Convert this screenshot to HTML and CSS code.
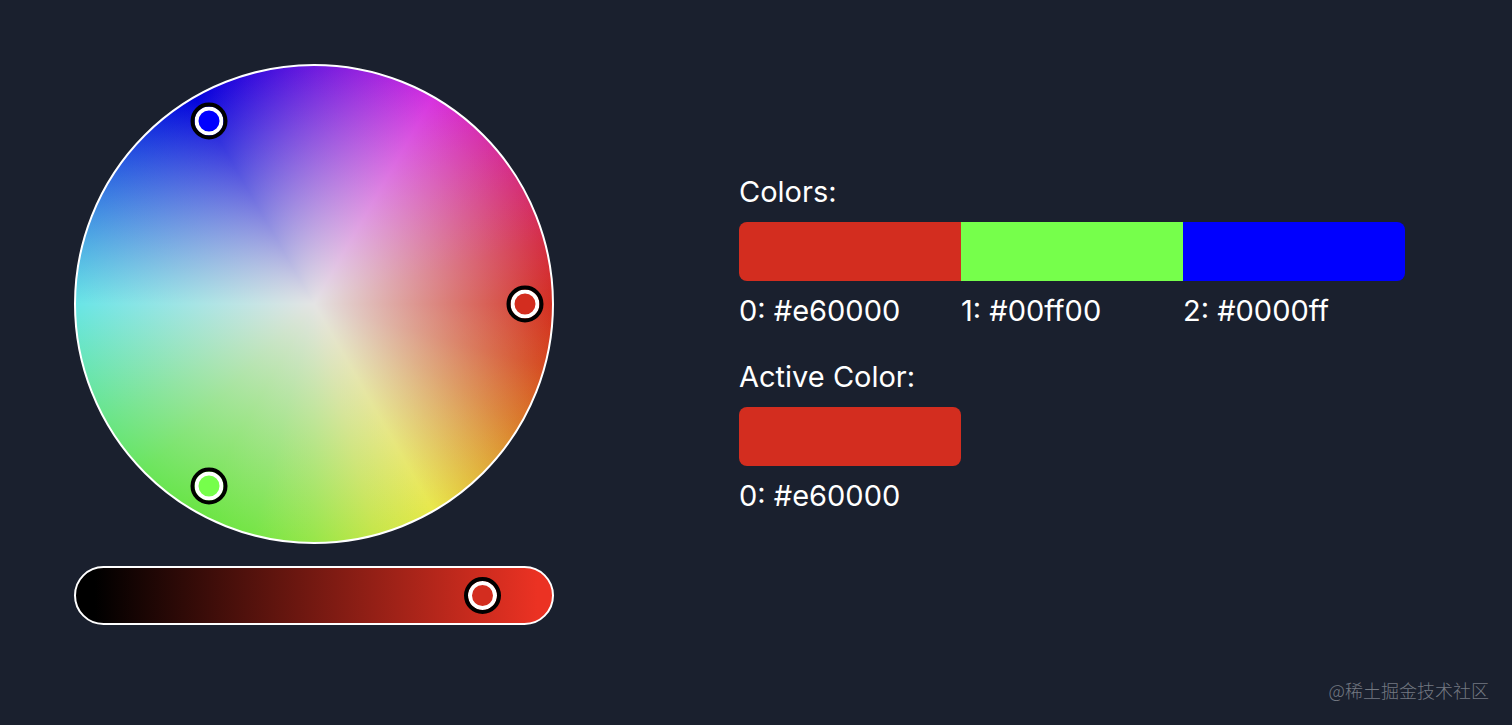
FILE: index.html
```
<!DOCTYPE html>
<html lang="en">
<head>
  <meta charset="UTF-8" />
  <meta name="viewport" content="width=device-width, initial-scale=1" />
  <title>Color Picker</title>
  <link rel="stylesheet" href="styles.css">
</head>
<body>
  <main class="demo">
    <div class="picker">
      <div class="wheel">
        <button class="handle handle-red" type="button" aria-label="Color 0"></button>
        <button class="handle handle-green" type="button" aria-label="Color 1"></button>
        <button class="handle handle-blue" type="button" aria-label="Color 2"></button>
      </div>
      <input class="slider" type="range" min="0" max="100" value="90" aria-label="Brightness">
    </div>

    <div class="values">
      <section>
        <h2 class="title">Colors:</h2>
        <ul class="swatches">
          <li><div class="swatch red"></div>0: #e60000</li>
          <li><div class="swatch green"></div>1: #00ff00</li>
          <li><div class="swatch blue"></div>2: #0000ff</li>
        </ul>
      </section>
      <section>
        <h2 class="title">Active Color:</h2>
        <ul class="swatches">
          <li><div class="swatch red"></div>0: #e60000</li>
        </ul>
      </section>
    </div>
  </main>

  <footer class="watermark">@稀土掘金技术社区</footer>
</body>
</html>
```
FILE: styles.css
```
* {
  box-sizing: border-box;
}
body {
  margin: 0;
  min-height: 100vh;
  display: flex;
  flex-direction: column;
  justify-content: space-between;
  background: #1a202e;
  color: #fff;
  font-family: Inter, "Noto Sans CJK SC", sans-serif;
  font-size: 29px;
  line-height: 44px;
}
.demo {
  display: grid;
  grid-template-columns: 480px minmax(0, 1fr);
  align-items: center;
  gap: 185px;
  padding: 64px 107px 0 74px;
}

/* wheel + slider */
.picker {
  display: flex;
  flex-direction: column;
  gap: 22px;
}
.wheel {
  position: relative;
  aspect-ratio: 1;
  border: 2px solid #fff;
  border-radius: 50%;
  background:
    radial-gradient(closest-side, #e4e4e4, transparent),
    conic-gradient(
      from 90deg,
      #d32d1f,
      #d54a20 15deg,
      #da7a2a 30deg,
      #e8e84a 60deg,
      #c6e648 75deg,
      #97e647 90deg,
      #75e545 105deg,
      #69e544 120deg,
      #69e559 135deg,
      #69e584 150deg,
      #68e5e6 180deg,
      #0000dc 240deg,
      #d730df 300deg,
      #d52e76 330deg,
      #d42d43 345deg,
      #d32d1f
    );
  background-origin: border-box;
}
.handle {
  position: absolute;
  width: 37px;
  height: 37px;
  padding: 0;
  border: 4px solid #000;
  border-radius: 50%;
  box-shadow: inset 0 0 0 4px #fff;
  transform: translate(-50%, -50%);
  cursor: pointer;
}
.handle-red {
  left: 94.3%;
  top: 50%;
  background: #d32d1f;
}
.handle-green {
  left: 28%;
  top: 88.3%;
  background: #76ff4b;
}
.handle-blue {
  left: 28%;
  top: 11.5%;
  background: #00f;
}
.slider {
  appearance: none;
  width: 100%;
  height: 59px;
  margin: 0;
  padding: 0 9px 0 11px;
  border: 2px solid #fff;
  border-radius: 30px;
  background: linear-gradient(to right, #000 4%, #eb3223 97%);
  cursor: pointer;
}
.slider::-webkit-slider-thumb {
  appearance: none;
  width: 37px;
  height: 37px;
  border: 4px solid #000;
  border-radius: 50%;
  background: #d32d1f;
  box-shadow: inset 0 0 0 4px #fff;
}

/* color values */
.values {
  display: flex;
  flex-direction: column;
  gap: 22px;
  padding-bottom: 2px;
}
.title {
  margin: 0 0 8px;
  font-size: inherit;
  font-weight: 400;
}
.swatches {
  display: grid;
  grid-template-columns: repeat(3, 1fr);
  margin: 0;
  padding: 0;
  list-style: none;
}
.swatch {
  height: 59px;
  margin-bottom: 8px;
}
.swatches li:first-child .swatch {
  border-top-left-radius: 8px;
  border-bottom-left-radius: 8px;
}
.swatches li:last-child .swatch {
  border-top-right-radius: 8px;
  border-bottom-right-radius: 8px;
}
.red {
  background: #d32d1f;
}
.green {
  background: #76ff4b;
}
.blue {
  background: #00f;
}

.watermark {
  padding: 0 23px 22px;
  color: #747982;
  font-family: "Noto Sans CJK SC", sans-serif;
  font-size: 18px;
  font-weight: 300;
  line-height: 26px;
  text-align: right;
}
```
